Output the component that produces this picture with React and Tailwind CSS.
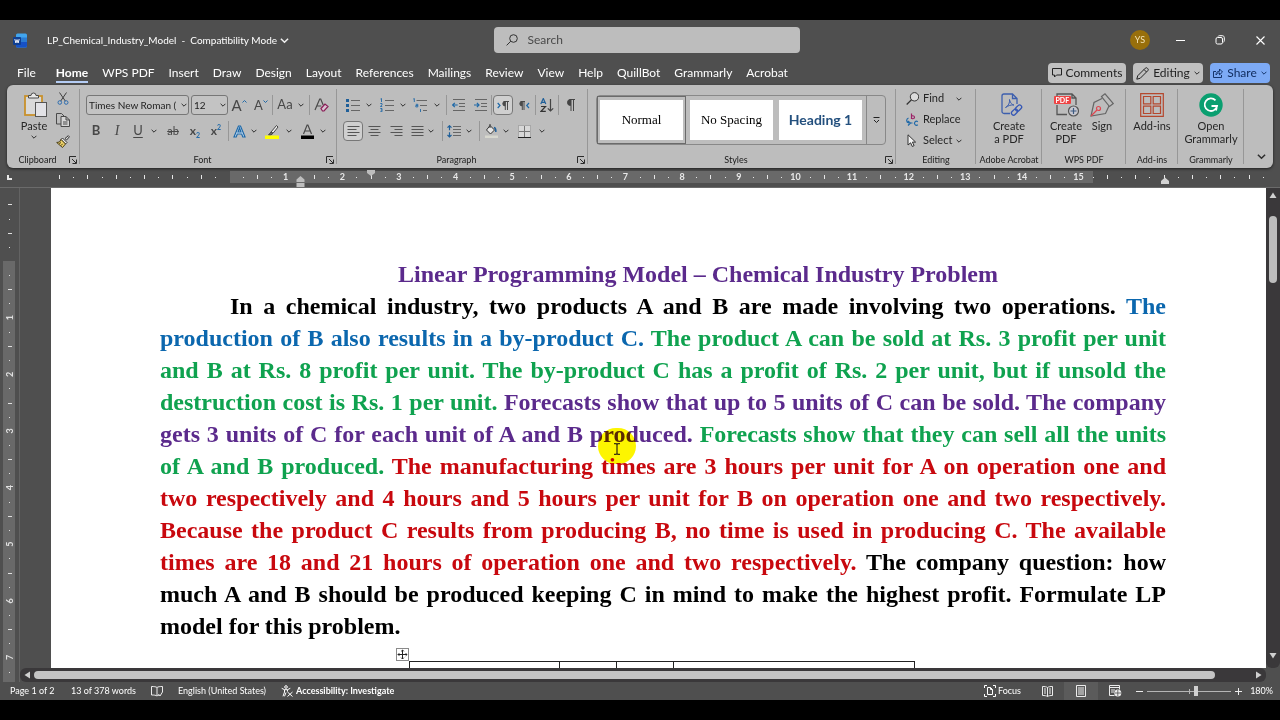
import React from "react";

const cx = (...parts) => parts.filter(Boolean).join(" ");

/* ---------- small building blocks ---------- */

function Svg({ w = 16, h = w, vw = w, vh = h, className, children }) {
  return (
    <svg
      width={w}
      height={h}
      viewBox={`0 0 ${vw} ${vh}`}
      fill="none"
      stroke="#4a4a4a"
      strokeWidth="1"
      aria-hidden="true"
      className={cx("shrink-0", className)}
    >
      {children}
    </svg>
  );
}

function Chevron({ size = 6, className = "stroke-[#2e2e2e]" }) {
  return (
    <svg width={size} height={size} viewBox="0 0 6 6" fill="none" strokeWidth="1" aria-hidden="true" className={cx("shrink-0", className)}>
      <path d="M0.6 1.8 3 4.2 5.4 1.8" />
    </svg>
  );
}

function Tool({ label, w = "w-5", boxed, children, className }) {
  return (
    <button
      type="button"
      aria-label={label}
      className={cx(
        "flex h-5 shrink-0 items-center justify-center",
        w,
        boxed && "rounded border border-[#777] bg-[#cfcfcf]",
        className
      )}
    >
      {children}
    </button>
  );
}

const Drop = ({ label, w = "w-2" }) => (
  <Tool label={label} w={w}>
    <Chevron />
  </Tool>
);

const Sep = ({ className }) => <span className={cx("h-5 w-px shrink-0 bg-[#979797]", className)} />;

function Launcher({ label }) {
  return (
    <button type="button" aria-label={label} className="absolute right-[3px] bottom-1">
      <Svg w={8}>
        <path stroke="#2b2b2b" d="M0.5 7V0.5H7M3 3l4 4M7.500 3.500v4h-4" />
      </Svg>
    </button>
  );
}

function Group({ label, w, launcher, children }) {
  return (
    <section aria-label={label} className={cx("relative flex shrink-0 flex-col", w)}>
      <div className="flex-1">{children}</div>
      <div className={cx("h-4 text-center text-[9px] leading-4 whitespace-nowrap text-[#1c1c1c]", launcher && "pr-3")}>{label}</div>
      {launcher && <Launcher label={launcher} />}
      <span className="absolute top-1 right-0 bottom-1 w-px bg-[#979797]" />
    </section>
  );
}

/* ---------- title bar ---------- */

function WordLogo() {
  return (
    <Svg w={14} h={15} className="stroke-none">
      <rect x="3" y="0.5" width="11" height="14" rx="1.500" fill="#41a5ee" stroke="none" />
      <rect x="3" y="4.500" width="11" height="5" fill="#2b7cd3" stroke="none" />
      <path d="M3 9h11v4a1.500 1.500 0 0 1-1.500 1.500h-8A1.500 1.500 0 0 1 3 13z" fill="#1651c6" stroke="none" />
      <rect x="0" y="4" width="8" height="8" rx="1" fill="#103f91" stroke="none" />
      <path d="M1.800 6 2.900 10 4 6.600 5.100 10 6.200 6" stroke="#fff" strokeWidth="0.9" />
    </Svg>
  );
}

function TitleBar() {
  return (
    <header className="flex h-10 shrink-0 items-center text-[#f0f0f0]">
      <div className="flex flex-1 items-center pl-[13px]">
        <WordLogo />
        <button type="button" className="ml-5 flex items-center gap-[3px] text-[10px] whitespace-nowrap text-white">
          <span>LP_Chemical_Industry_Model&nbsp; -&nbsp; Compatibility Mode</span>
          <Chevron size={9} className="stroke-[#f0f0f0]" />
        </button>
      </div>
      <label className="flex h-[26px] w-[306px] items-center gap-2.5 rounded-sm bg-[#bdbdbd] pl-3">
        <Svg w={12}>
          <circle cx="7.500" cy="4.500" r="3.800" stroke="#333" />
          <path d="M4.800 7.200 0.600 11.400" stroke="#333" />
        </Svg>
        <input
          type="search"
          aria-label="Search"
          placeholder="Search"
          className="w-full bg-transparent text-xs text-[#333] outline-none placeholder:text-[#4a4a4a]"
        />
      </label>
      <div className="flex flex-1 justify-end">
        <button type="button" aria-label="Account" className="flex w-10 justify-center">
          <span className="flex size-5 items-center justify-center rounded-full bg-[#986f0b] text-[9px] text-[#f3e3b5]">YS</span>
        </button>
        <button type="button" aria-label="Minimize" className="flex w-10 items-center justify-center">
          <Svg w={9}><path d="M0 4.500h9" stroke="#fff" /></Svg>
        </button>
        <button type="button" aria-label="Restore" className="flex w-10 items-center justify-center">
          <Svg w={10}>
            <rect x="1" y="2.500" width="6.500" height="6.500" rx="1.500" stroke="#fff" />
            <path d="M3 1.500C3.300 0.900 3.700 0.700 4.300 0.700H7.300C8.500 0.700 9.300 1.500 9.300 2.700V5.700C9.300 6.400 9 6.900 8.500 7.100" stroke="#fff" />
          </Svg>
        </button>
        <button type="button" aria-label="Close" className="flex w-10 items-center justify-center">
          <Svg w={9}><path d="M0.500 0.500 8.500 8.500M8.500 0.500 0.500 8.500" stroke="#fff" strokeWidth="1.100" /></Svg>
        </button>
      </div>
    </header>
  );
}

/* ---------- tabs ---------- */

const TABS = [
  "File", "Home", "WPS PDF", "Insert", "Draw", "Design", "Layout", "References", "Mailings",
  "Review", "View", "Help", "QuillBot", "Grammarly", "Acrobat",
];

function TabRow() {
  return (
    <div className="flex h-[25px] shrink-0 items-start justify-between pr-2.5">
      <nav className="flex gap-3.5 pt-1 pl-[17px] text-xs leading-[18px] text-white">
        {TABS.map((t) => (
          <a
            key={t}
            href={"#" + t.toLowerCase().replace(" ", "-")}
            className={cx(
              "h-[19px] whitespace-nowrap",
              t === "File" && "mr-1.5",
              t === "Home" && "border-b-2 border-[#b5cdf5] font-bold text-white"
            )}
          >
            {t}
          </a>
        ))}
      </nav>
      <div className="flex gap-[7px] pt-[3px] text-xs text-[#222]">
        <button type="button" className="flex h-5 w-[78px] items-center justify-center gap-1 rounded-sm bg-[#c0c0c0]">
          <Svg w={10}><path d="M0.500 0.500h9v6.500h-5L2.500 9V7H0.500z" stroke="#222" /></Svg>
          Comments
        </button>
        <button type="button" className="flex h-5 w-[70px] items-center justify-center gap-1 rounded-sm bg-[#c0c0c0]">
          <Svg w={13}><path d="M0.800 12.200 1.700 8.800 9.300 1.200a1.400 1.400 0 0 1 2 0l.5.5a1.400 1.400 0 0 1 0 2L4.200 11.300zM8 2.500l2.500 2.500" stroke="#222" /></Svg>
          Editing
          <Chevron />
        </button>
        <button type="button" className="flex h-5 w-[60px] items-center justify-center gap-1 rounded-sm bg-[#7daaf5] text-[#0f2a5c]">
          <Svg w={10}><path d="M3 3.500H0.500v6h8V7M3 7C3 4.500 4.500 3.300 6.500 3.300V1L9.500 4 6.500 6.800V4.900C5 4.900 4 5.500 3 7z" stroke="#16356b" /></Svg>
          Share
          <Chevron className="stroke-[#16356b]" />
        </button>
      </div>
    </div>
  );
}

/* ---------- ribbon groups ---------- */

function ClipboardGroup() {
  return (
    <Group label="Clipboard" w="w-[73px]" launcher="Clipboard options">
      <div className="flex pt-[7px] pl-[15px]">
        <button type="button" className="flex w-6 flex-col items-center text-[11px] leading-4">
          <Svg w={24} h={26} className="ml-0.5">
            <rect x="2" y="4" width="17" height="19" fill="#d9d9d9" stroke="#c8912c" strokeWidth="1.800" />
            <path d="M5.500 6V3.500H8a2.500 2.500 0 0 1 5 0h2.500V6z" fill="#e9e9e9" stroke="#4b4b4b" />
            <rect x="12.500" y="10.500" width="11" height="14" fill="#e2e2e6" stroke="#555" />
          </Svg>
          Paste
          <Chevron />
        </button>
        <div className="ml-2.5 flex flex-col items-center gap-2">
          <button type="button" aria-label="Cut">
            <Svg w={12} h={13} className="block">
              <path d="M2.500 0.500 8.300 9M9.500 0.500 3.700 9" stroke="#3f3f3f" />
              <circle cx="2.800" cy="10.500" r="1.800" stroke="#2b6cb0" />
              <circle cx="9.200" cy="10.500" r="1.800" stroke="#2b6cb0" />
            </Svg>
          </button>
          <button type="button" aria-label="Copy">
            <Svg w={14} h={14} className="block">
              <path d="M5 11H0.500V0.500h5L8 3" />
              <path d="M5 3.500h5L13.500 7v6.500H5zM10 3.500V7h3.500M7 9h4.500M7 11h4.500" fill="#d6d6d6" />
            </Svg>
          </button>
          <button type="button" aria-label="Format Painter">
            <Svg w={14} h={13} className="block">
              <path d="M9 3.500 12.300 0.700 13.400 1.800 10.600 5z" fill="#ddd" stroke="#333" />
              <path d="M6.500 3 11 7.500 9.500 9 5 4.500z" fill="#eee" stroke="#333" />
              <path d="M5 4.500 9.500 9 6.500 12.500 0.700 7.500 3.500 7z" fill="#f0d36a" stroke="#4a3f1a" />
              <path d="M3.200 8.800 5 7.500M5 10.600 6.600 8.800" stroke="#4a3f1a" />
            </Svg>
          </button>
        </div>
      </div>
    </Group>
  );
}

function Combo({ label, value, w }) {
  return (
    <span className={cx("relative h-5 shrink-0", w)}>
      <select
        aria-label={label}
        defaultValue={value}
        className="block size-full appearance-none rounded-[3px] border border-[#777] bg-[#c3c3c3] pl-0.5 text-[10px] text-[#222]"
      >
        <option>{value}</option>
      </select>
      <span className="pointer-events-none absolute top-[7px] right-0.5">
        <Chevron className="block stroke-[#2e2e2e]" />
      </span>
    </span>
  );
}

function FontGroup() {
  return (
    <Group label="Font" w="w-[257px]" launcher="Font options">
      <div className="flex items-center pt-2.5 pl-1.5 text-[#484848]">
        <Combo label="Font name" value="Times New Roman (" w="w-[103px]" />
        <Combo label="Font size" value="12" w="w-[37px] ml-0.5" />
        <Tool label="Grow font" w="w-5.5">
          <span className="text-[15px] leading-5">A</span>
          <Svg w={5} className="mb-2"><path d="M0.500 3.500 2.500 1.500 4.500 3.500" stroke="#1f69a8" /></Svg>
        </Tool>
        <Tool label="Shrink font" w="w-5.5">
          <span className="text-[13px] leading-5">A</span>
          <Svg w={5} className="mb-2"><path d="M0.500 1.500 2.500 3.500 4.500 1.500" stroke="#1f69a8" /></Svg>
        </Tool>
        <Sep />
        <Tool label="Change case" w="w-6"><span className="text-[13px]">Aa</span></Tool>
        <Drop label="Change case options" />
        <Sep className="ml-1" />
        <Tool label="Clear formatting" w="w-5.5">
          <Svg w={15} h={14}>
            <path d="M1 12 5.700 1h1l2.500 6M2.800 8h4.500" strokeWidth="1.200" />
            <path d="M7 10.500 11 6l3 2.500-4 4.500H8.500z" fill="#d9c3d2" stroke="#8a1c56" strokeWidth="1.200" />
          </Svg>
        </Tool>
      </div>
      <div className="flex items-center pt-1.5 pl-1.5 text-[#484848]">
        <Tool label="Bold"><b className="text-[13px]">B</b></Tool>
        <Tool label="Italic" w="w-5.5"><i className="font-['Liberation_Serif',serif] text-sm">I</i></Tool>
        <Tool label="Underline"><span className="text-[13px] underline underline-offset-2">U</span></Tool>
        <Drop label="Underline options" w="w-3" />
        <Tool label="Strikethrough" w="w-6.5"><s className="text-[11px]">ab</s></Tool>
        <Tool label="Subscript" w="w-4.5"><b className="text-xs">x</b><b className="mt-2 text-[7px] text-[#1f69a8]">2</b></Tool>
        <Tool label="Superscript" w="w-6"><b className="text-xs">x</b><b className="mb-2 text-[7px] text-[#1f69a8]">2</b></Tool>
        <Sep />
        <Tool label="Text effects">
          <Svg w={13} h={13}>
            <path d="M1 12 5.500 1h2L12 12H9.800L8.700 9H4.300L3.200 12zM5 7h3L6.500 3z" fill="#cfe3f5" stroke="#1f69a8" strokeWidth="1.200" />
          </Svg>
        </Tool>
        <Drop label="Text effects options" w="w-2.5" />
        <Tool label="Highlight color" w="w-6.5">
          <Svg w={14} h={15}>
            <path d="M6 8 11.500 1.500 13 3 8 9.300z" fill="#eee" stroke="#444" />
            <path d="M6 8 8 9.300 6 11H3.500z" fill="#666" stroke="#444" />
            <rect y="11.500" width="14" height="3.500" fill="#ffff00" stroke="none" />
          </Svg>
        </Tool>
        <Drop label="Highlight options" />
        <Tool label="Font color" w="w-6" className="ml-0.5">
          <Svg w={13} h={15}>
            <path d="M2.500 10 6.100 1h0.800L10.500 10M3.800 7h5.400" strokeWidth="1.200" />
            <rect y="11.500" width="13" height="3.500" fill="#000" stroke="none" />
          </Svg>
        </Tool>
        <Drop label="Font color options" />
      </div>
    </Group>
  );
}

const Lines = ({ d }) => <Svg w={13} h={10}><path d={d} stroke="#555" /></Svg>;

function ParagraphGroup() {
  return (
    <Group label="Paragraph" w="w-[251px]" launcher="Paragraph options">
      <div className="flex items-center pt-2.5 pl-1.5">
        <Tool label="Bullets">
          <Svg w={14} h={14}>
            <path d="M5 2.500h9M5 7.500h9M5 12.500h9" stroke="#666" />
            <path d="M0 1h3v3H0zM0 6h3v3H0zM0 11h3v3H0z" fill="#1f5f99" stroke="none" />
          </Svg>
        </Tool>
        <Drop label="Bullet options" w="w-3" />
        <Tool label="Numbering" w="w-6">
          <Svg w={14} h={14}>
            <path d="M5 2.500h9M5 7.500h9M5 12.500h9" stroke="#666" />
            <path d="M0.500 1 1.500 0.500V4M0.300 5.500h1.700v1.300L0.400 8.500H2.200M0.300 10.500H2v3.200H0.300M0.800 12H2" stroke="#1f69a8" strokeWidth="0.900" />
          </Svg>
        </Tool>
        <Drop label="Numbering options" />
        <Tool label="Multilevel list" w="w-6.5">
          <Svg w={14} h={14}>
            <path d="M3.500 2.500H14M7 7.500h7M10 12.500h4" stroke="#666" />
            <path d="M0.300 1 1.300 0.500V4M2.800 6.300h2v2.600h-2V7.500h2M7.500 11v3" stroke="#1f69a8" strokeWidth="0.900" />
          </Svg>
        </Tool>
        <Drop label="Multilevel options" />
        <Sep className="ml-[5px]" />
        <Tool label="Decrease indent" w="w-5.5">
          <Svg w={13} h={12}>
            <path d="M1 0.500h12M7 4.500h6M7 7.500h6M1 11.500h12" stroke="#666" />
            <path d="M0.700 6h5M2.800 3.800 0.700 6l2.100 2.200" stroke="#1f69a8" strokeWidth="1.200" />
          </Svg>
        </Tool>
        <Tool label="Increase indent" w="w-5.5">
          <Svg w={13} h={12}>
            <path d="M1 0.500h12M7 4.500h6M7 7.500h6M1 11.500h12" stroke="#666" />
            <path d="M0 6h5M2.900 3.800 5 6 2.900 8.200" stroke="#1f69a8" strokeWidth="1.200" />
          </Svg>
        </Tool>
        <Sep />
        <Tool label="Left to right" boxed className="ml-px">
          <Svg w={12} h={9}>
            <path d="M0.700 2 3 4.500 0.700 7" stroke="#1f69a8" strokeWidth="1.200" />
            <path d="M6.500 0.500H12M8.300 0.500V9M10.500 0.500V9" />
            <path d="M8 0.500a2.200 2.200 0 0 0 0 4.400z" fill="#4a4a4a" />
          </Svg>
        </Tool>
        <Tool label="Right to left" w="w-5.5">
          <Svg w={12} h={9}>
            <path d="M11 2 8.700 4.500 11 7" stroke="#1f69a8" strokeWidth="1.200" />
            <path d="M2.500 0.500H7M4.300 0.500V9M6 0.500V9" />
            <path d="M4 0.500a2.200 2.200 0 0 0 0 4.400z" fill="#4a4a4a" />
          </Svg>
        </Tool>
        <Sep />
        <Tool label="Sort" w="w-5.5">
          <Svg w={14} h={14}>
            <path d="M0.800 6 3.300 0.500 5.800 6M1.800 4.300h3" stroke="#1f5f99" strokeWidth="1.200" />
            <path d="M1 8.500h4.500L1 13.300h4.800" stroke="#333" strokeWidth="1.200" />
            <path d="M10.500 1v12M7.800 10.300l2.700 2.700 2.700-2.700" stroke="#444" strokeWidth="1.200" />
          </Svg>
        </Tool>
        <Sep />
        <Tool label="Show formatting marks" w="w-5.5">
          <Svg w={9} h={12}>
            <path d="M3.500 0.500H9M5 0.500V12M7.500 0.500V12" stroke="#444" />
            <path d="M4.500 0.500a3 3 0 0 0 0 6z" fill="#444" stroke="#444" />
          </Svg>
        </Tool>
      </div>
      <div className="flex items-center pt-1.5 pl-1.5">
        <Tool label="Align left" boxed><Lines d="M0.500 0.500h12M0.500 3.500h9M0.500 6.500h12M0.500 9.500h9" /></Tool>
        <Tool label="Center" w="w-5.5"><Lines d="M0.500 0.500h12M2.500 3.500h8M0.500 6.500h12M2.500 9.500h8" /></Tool>
        <Tool label="Align right" w="w-5.5"><Lines d="M0.500 0.500h12M4.500 3.500h8M0.500 6.500h12M4.500 9.500h8" /></Tool>
        <Tool label="Justify"><Lines d="M0.500 0.500h12M0.500 3.500h12M0.500 6.500h12M0.500 9.500h12" /></Tool>
        <Drop label="Justify options" />
        <Sep className="ml-[7px]" />
        <Tool label="Line spacing" w="w-5.5">
          <Svg w={14} h={13}>
            <path d="M6 1.500h8M6 4.500h8M6 7.500h8M6 10.500h8" stroke="#666" />
            <path d="M2.500 0.700v4.600M0.500 2.700l2-2 2 2M2.500 7.300V12M0.500 10l2 2 2-2" stroke="#1f5f99" strokeWidth="1.200" />
          </Svg>
        </Tool>
        <Drop label="Line spacing options" />
        <Sep className="ml-1.5" />
        <Tool label="Shading" w="w-5.5">
          <Svg w={13} h={14}>
            <path d="M5 1.500 9.500 6 5.500 10 1.500 6z" fill="#e5e5e5" stroke="#333" />
            <path d="M5 0v4" stroke="#333" />
            <path d="M9 3.500c1.800 0.500 2 2.500 1.800 4.500" stroke="#1f5f99" strokeWidth="1.500" />
            <rect x="0" y="11.500" width="13" height="2.500" fill="#d8d8cf" stroke="none" />
          </Svg>
        </Tool>
        <Drop label="Shading options" />
        <Tool label="Borders" w="w-7">
          <Svg w={13} h={13}>
            <rect x="0.500" y="0.500" width="12" height="12" fill="#d8d8d8" stroke="#888" strokeDasharray="1 1" />
            <path d="M6.500 1v11M1 6.500h11" stroke="#777" />
            <path d="M0 12.500h13" stroke="#222" />
          </Svg>
        </Tool>
        <Drop label="Borders options" />
      </div>
    </Group>
  );
}

function StylesGroup() {
  const tile = "h-10 w-[83px] bg-white whitespace-nowrap";
  return (
    <Group label="Styles" w="w-[308px]" launcher="Styles options">
      <div className="mt-2.5 ml-2 flex h-[50px] w-[290px] rounded border border-[#888]">
        <div className="flex flex-1 items-center gap-1">
          <div className="flex h-12 items-center border border-[#6a6a6a] px-0.5">
            <button type="button" className={cx(tile, "font-['Liberation_Serif',serif] text-[13px] text-black")}>Normal</button>
          </div>
          <button type="button" className={cx(tile, "font-['Liberation_Serif',serif] text-[13px] text-black")}>No Spacing</button>
          <button type="button" className={cx(tile, "ml-0.5 text-sm font-bold text-[#24507e]")}>Heading 1</button>
        </div>
        <button type="button" aria-label="More styles" className="flex w-[19px] items-center justify-center border-l border-[#888]">
          <Svg w={7}><path d="M0.500 0.500h6M1 3l2.500 2.500L6 3" stroke="#222" /></Svg>
        </button>
      </div>
    </Group>
  );
}

function EditingGroup() {
  const row = "flex h-[21px] items-center gap-1 text-[11px] whitespace-nowrap";
  return (
    <Group label="Editing" w="w-20">
      <div className="flex flex-col pt-[3px] pl-2.5">
        <button type="button" className={row}>
          <Svg w={13} h={13}>
            <circle cx="8.500" cy="4.800" r="4.200" fill="#dcdcdc" stroke="#333" />
            <path d="M5.500 7.800 0.700 12.500" stroke="#333" strokeWidth="1.200" />
          </Svg>
          Find
          <span className="ml-2"><Chevron /></span>
        </button>
        <button type="button" className={row}>
          <Svg w={13} h={14}>
            <path d="M5.500 0.500v5.500M5.500 3.500a1.600 1.500 0 1 1 0 1.500" stroke="#9c2367" strokeWidth="1.200" />
            <path d="M11.800 8.800a2 2 0 1 0 0 3" stroke="#1f69a8" strokeWidth="1.200" />
            <path d="M2.500 5C0 6 0 9.500 3 10M1.800 8 4.500 10 2 12.500M4 10h2.500" stroke="#1f69a8" strokeWidth="1.200" />
          </Svg>
          Replace
        </button>
        <button type="button" className={row}>
          <Svg w={13} h={13}>
            <path d="M2 0.800V11l2.600-2.200 1.700 3.700 1.800-0.900L6.400 8.100H9.600z" fill="#f2f2f2" stroke="#333" />
          </Svg>
          Select
          <Chevron />
        </button>
      </div>
    </Group>
  );
}

function BigButton({ icon, lines, className }) {
  return (
    <button type="button" className={cx("flex flex-col items-center text-[11px] leading-[13px] whitespace-nowrap", className)}>
      <span className="flex h-7 items-center">{icon}</span>
      {lines.map((l) => (
        <span key={l}>{l}</span>
      ))}
    </button>
  );
}

function ExtensionGroups() {
  return (
    <>
      <Group label="Adobe Acrobat" w="w-[66px]">
        <BigButton
          className="w-full pt-1.5"
          lines={["Create", "a PDF"]}
          icon={
            <Svg w={22} h={24} className="ml-1.5">
              <path d="M9 20.500H3A2 2 0 0 1 1 18.500V3A2 2 0 0 1 3 1h8.500L16 5.500V11M11.500 1V5.500H16" stroke="#3d5fae" strokeWidth="1.300" />
              <path d="M4.500 14.500c3-1.500 4.500-5 4-8 1 4 2.500 5 4.500 5.500-3-0.300-5.500 0.500-8.500 2.500" stroke="#3d5fae" />
              <rect x="10" y="17" width="7" height="4.200" rx="2.100" transform="rotate(-45 13.500 19)" stroke="#3557b5" strokeWidth="1.300" />
              <rect x="14" y="13" width="7" height="4.200" rx="2.100" transform="rotate(-45 17.500 15)" stroke="#3557b5" strokeWidth="1.300" />
            </Svg>
          }
        />
      </Group>
      <Group label="WPS PDF" w="w-[84px]">
        <div className="flex pt-1.5 pl-1.5">
          <BigButton
            className="w-9"
            lines={["Create", "PDF"]}
            icon={
              <Svg w={25} h={24}>
                <path d="M3 4V1h15l4 4v7M18 1v4h4M3 12v9.500h10" stroke="#555" strokeWidth="1.300" />
                <rect x="0" y="3" width="17" height="8" rx="1" fill="#ef4444" stroke="none" />
                <text x="1.500" y="9.800" fontSize="7" fontWeight="700" fill="#fff" stroke="none">PDF</text>
                <circle cx="19.500" cy="18" r="5" fill="#c8c8d0" stroke="#555" strokeWidth="1.200" />
                <path d="M16.500 18h6M19.500 15v6" stroke="#3c5a80" strokeWidth="1.200" />
              </Svg>
            }
          />
          <BigButton
            className="w-9"
            lines={["Sign"]}
            icon={
              <Svg w={24} h={24}>
                <path d="M11.500 3.500 15 0.800 23.300 10.500 19.500 13.500z" stroke="#666" strokeWidth="1.200" />
                <path d="M12 5.500 4 9.500 1 23l14.500-2.500L19 13" stroke="#666" strokeWidth="1.200" />
                <path d="M1 23l6-6" stroke="#e0454f" strokeWidth="1.200" />
                <circle cx="8.500" cy="15.500" r="2" stroke="#e0454f" strokeWidth="1.200" />
              </Svg>
            }
          />
        </div>
      </Group>
      <Group label="Add-ins" w="w-[52px]">
        <BigButton
          className="w-full pt-1.5"
          lines={["Add-ins"]}
          icon={
            <Svg w={24} h={24}>
              <path
                d="M0.700 0.700h22.600v22.600H0.700zM3.500 3.500h7.300v7.300H3.500zM13.200 3.500h7.300v7.300h-7.300zM3.500 13.200h7.300v7.300H3.500zM13.200 13.200h7.300v7.300h-7.300z"
                stroke="#b5482e"
                strokeWidth="1.200"
              />
            </Svg>
          }
        />
      </Group>
      <Group label="Grammarly" w="w-[66px]">
        <BigButton
          className="w-full pt-1.5"
          lines={["Open", "Grammarly"]}
          icon={
            <Svg w={24} h={24}>
              <circle cx="12" cy="12" r="11.700" fill="#0a9f70" stroke="none" />
              <path d="M16.500 7.300A6.300 6.300 0 1 0 18 13.500M12.500 13h5.500l-1 4.500" stroke="#fff" strokeWidth="1.800" />
            </Svg>
          }
        />
      </Group>
    </>
  );
}

function Ribbon() {
  return (
    <div className="mx-[7px] flex h-[83px] shrink-0 rounded-md bg-[#bdbdbd] text-[#262626] shadow-[0_1px_3px_rgba(0,0,0,0.6)]">
      <ClipboardGroup />
      <FontGroup />
      <ParagraphGroup />
      <StylesGroup />
      <EditingGroup />
      <ExtensionGroups />
      <div className="flex flex-1 items-end justify-end pr-[7px] pb-[7px]">
        <button type="button" aria-label="Collapse ribbon"><Chevron size={9} className="block stroke-[#2e2e2e]" /></button>
      </div>
    </div>
  );
}

/* ---------- rulers ---------- */

const CM = 56.64;

function marks(from, to, first, last) {
  const out = [];
  for (let q = from * 4; q <= to * 4; q++) {
    const cm = q / 4;
    if (q === 0) continue;
    if (q % 4 === 0 && cm >= first && cm <= last) out.push({ cm, kind: "number" });
    else out.push({ cm, kind: q % 2 === 0 ? "bar" : "dot" });
  }
  return out;
}

function HorizontalRuler() {
  const zero = 229;
  return (
    <div className="h-5 shrink-0 overflow-hidden border-b border-[#6b6b6b]">
      <svg width="100%" height="20" fill="#e8e8e8" aria-label="Horizontal ruler" role="img">
        <rect x="230" y="3" width="863" height="12" fill="#696969" />
        <path d="M7 7v5h5v-2H9V7z" />
        {marks(-3, 18.25, 1, 15).map(({ cm, kind }) => {
          const x = zero + cm * CM;
          if (kind === "number")
            return <text key={cm} x={x} y="12" fontSize="9" fontWeight="700" textAnchor="middle">{cm}</text>;
          return <rect key={cm} x={Math.round(x)} y={kind === "bar" ? 7 : 9} width="1" height={kind === "bar" ? 4 : 1} />;
        })}
        <path d="M367 2h8v3l-4 3-4-3z" fill="#bdbdbd" />
        <path d="M296.500 14v-2.500l4-3.500 4 3.500V14zM296.500 15h8v4h-8z" fill="#bdbdbd" />
        <path d="M1161 16v-3l4-3.500 4 3.500v3z" fill="#d2d2d2" />
      </svg>
    </div>
  );
}

function VerticalRuler() {
  const zero = 73;
  return (
    <div className="w-5 shrink-0 overflow-hidden border-r border-[#636363]">
      <svg width="19" height="100%" fill="#e0e0e0" aria-label="Vertical ruler" role="img">
        <rect x="3" y="73" width="12" height="100%" fill="#696969" />
        {marks(-1, 7.25, 1, 7).map(({ cm, kind }) => {
          const y = zero + cm * CM;
          if (kind === "number")
            return (
              <text key={cm} fontSize="9" fontWeight="700" textAnchor="middle" transform={`translate(13 ${y}) rotate(-90)`}>
                {cm}
              </text>
            );
          return <rect key={cm} x={kind === "bar" ? 8 : 9} y={Math.round(y)} width={kind === "bar" ? 4 : 1} height="1" />;
        })}
      </svg>
    </div>
  );
}

/* ---------- document ---------- */

function DocumentPage() {
  return (
    <article className="relative ml-[31px] flex-1 overflow-hidden bg-white pt-[70px] pr-[100px] pl-[109px] font-['Liberation_Serif',serif] text-2xl leading-8 font-bold text-black">
      <h1 className="text-center indent-[70px] text-[#5b2a8c]">Linear Programming Model – Chemical Industry Problem</h1>
      <p className="text-justify indent-[70px]">
        In a chemical industry, two products A and B are made involving two operations.{" "}
        <span className="text-[#0b67ae]">The production of B also results in a by-product C.</span>{" "}
        <span className="text-[#0fa24f]">
          The product A can be sold at Rs. 3 profit per unit and B at Rs. 8 profit per unit. The by-product C has a profit
          of Rs. 2 per unit, but if unsold the destruction cost is Rs. 1 per unit.
        </span>{" "}
        <span className="text-[#5b2a8c]">
          Forecasts show that up to 5 units of C can be sold. The company gets 3 units of C for each unit of A and B
          produced.
        </span>{" "}
        <span className="text-[#0fa24f]">Forecasts show that they can sell all the units of A and B produced.</span>{" "}
        <span className="text-[#c8080e]">
          The manufacturing times are 3 hours per unit for A on operation one and two respectively and 4 hours and 5 hours
          per unit for B on operation one and two respectively. Because the product C results from producing B, no time is
          used in producing C. The available times are 18 and 21 hours of operation one and two respectively.
        </span>{" "}
        The company question: how much A and B should be produced keeping C in mind to make the highest profit. Formulate
        LP model for this problem.
      </p>
      <div className="relative mt-[19px] ml-[249px] w-[506px]">
        <button type="button" aria-label="Move table" className="absolute -top-[13px] -left-[13px] bg-white">
          <Svg w={13} className="block">
            <rect x="0.500" y="0.500" width="12" height="12" stroke="#8a8a8a" />
            <path d="M6.500 2v9M2 6.500h9M5.200 3.300 6.500 2l1.300 1.300M5.200 9.700l1.300 1.300 1.300-1.300M3.300 5.200 2 6.500l1.300 1.300M9.700 5.200 11 6.500 9.700 7.800" stroke="#222" />
          </Svg>
        </button>
        <table className="w-full table-fixed border-collapse">
          <tbody>
            <tr className="h-8">
              <td className="w-[150px] border border-[#222]" />
              <td className="w-[57px] border border-[#222]" />
              <td className="w-[57px] border border-[#222]" />
              <td className="border border-[#222]" />
            </tr>
          </tbody>
        </table>
      </div>
      <div className="absolute top-[240px] left-[547px] h-[36px] w-[38px] rounded-full bg-[#fdf500] mix-blend-multiply" />
      <Svg w={8} h={12} className="absolute top-[255px] left-[562px]">
        <path d="M1 0.700h2.200L4 1.500 4.800 0.700H7M4 1.500v9M1 11.300h2.200L4 10.500l0.800 0.800H7" stroke="#3d3510" strokeWidth="1.300" />
      </Svg>
    </article>
  );
}

function Arrow({ d, label }) {
  return (
    <button type="button" aria-label={label}>
      <Svg w={8} className="block"><path d={d} fill="#d0d0d0" stroke="none" /></Svg>
    </button>
  );
}

function Workspace() {
  return (
    <div className="flex min-h-0 flex-1">
      <VerticalRuler />
      <div className="flex min-w-0 flex-1 flex-col">
        <div className="flex min-h-0 flex-1">
          <DocumentPage />
          <div className="flex w-3.5 shrink-0 flex-col items-center rounded-b-md bg-[#3a383a] pt-[3px] pb-0.5">
            <Arrow label="Scroll up" d="M0.500 7 4 1.500 7.500 7z" />
            <span className="mt-[17px] h-[67px] w-2 rounded-full bg-[#bdbdbd]" />
            <span className="mt-auto"><Arrow label="Scroll down" d="M0.500 1 4 6.500 7.500 1z" /></span>
          </div>
        </div>
        <div className="mr-3.5 flex h-3.5 shrink-0 items-center rounded-md bg-[#3a383a] pr-[3px] pl-[3px]">
          <Arrow label="Scroll left" d="M7 0.500 1.500 4 7 7.500z" />
          <span className="mr-10 ml-[3px] h-2 flex-1 rounded-full bg-[#c4c4c4]" />
          <Arrow label="Scroll right" d="M1 0.500 6.500 4 1 7.500z" />
        </div>
      </div>
    </div>
  );
}

/* ---------- status bar ---------- */

function StatusBar() {
  return (
    <footer className="flex h-[18px] shrink-0 items-center justify-between pr-[7px] pl-2.5 text-[9px] whitespace-nowrap text-white">
      <div className="flex items-center">
        <button type="button" className="w-[61px] text-left">Page 1 of 2</button>
        <button type="button" className="w-20 text-left">13 of 378 words</button>
        <button type="button" aria-label="Proofing" className="w-[27px]">
          <Svg w={12} h={11} className="block">
            <path d="M6 1.500v8M6 1.500C5 0.700 3 0.500 0.500 0.500V9C3 9 5 9.200 6 10c0.500-0.500 1-0.700 2-0.900M6 1.500c1-0.800 3-1 5.500-1V6M7.500 8l1.500 2 2.800-4.500" stroke="#ececec" />
          </Svg>
        </button>
        <button type="button" className="w-[103px] text-left">English (United States)</button>
        <button type="button" className="flex items-center gap-[3px] font-bold">
          <Svg w={12} h={12}>
            <circle cx="5" cy="2" r="1.300" stroke="#fff" />
            <path d="M0.700 3.300 3.500 4.700V7L2 11.300M9.300 3.300 6.500 4.700V6.500M5 7.500 3.500 11.300M3.500 4.700h3M6.500 7l5 4.500M11.500 7l-5 4.500" stroke="#fff" />
          </Svg>
          Accessibility: Investigate
        </button>
      </div>
      <div className="flex items-center">
        <button type="button" className="flex w-[47px] items-center gap-0.5">
          <Svg w={12} h={12}>
            <path d="M0.500 3V0.500H3M9 0.500h2.500V3M0.500 9v2.500H3M9 11.500h2.500V9M3.500 2.500h3l2 2v5h-5zM6.500 2.500v2h2" stroke="#fff" />
          </Svg>
          Focus
        </button>
        <button type="button" aria-label="Read mode" className="flex h-[18px] w-[33px] items-center justify-center">
          <Svg w={11} h={11}><path d="M5.500 1.500v9M5.500 1.500C4.500 0.700 2.500 0.500 0.500 0.500v9c2 0 4 0.200 5 1 1-0.800 3-1 5-1v-9c-2 0-4 0.200-5 1M2 3h2M2 5h2M2 7h2M7 3h2M7 5h2M7 7h2" stroke="#ececec" /></Svg>
        </button>
        <button type="button" aria-label="Print layout" className="flex h-[18px] w-[34px] items-center justify-center bg-[#5b5b5b]">
          <Svg w={10} h={12}><path d="M0.500 0.500h9v11h-9zM2 3h6M2 5h6M2 7h6M2 9h6" stroke="#ececec" /></Svg>
        </button>
        <button type="button" aria-label="Web layout" className="flex h-[18px] w-[34px] items-center justify-center">
          <Svg w={13} h={12}>
            <path d="M5.500 10.500h-5v-10h10v4M0.500 2.500h10M2 5h4M2 7h3" stroke="#ececec" />
            <circle cx="8.800" cy="8" r="3.500" fill="#ececec" stroke="none" />
            <path d="M8.800 5v6M6 8h6" stroke="#4f4f4f" strokeWidth="0.800" />
          </Svg>
        </button>
        <button type="button" aria-label="Zoom out" className="flex w-3.5 justify-center">
          <Svg w={7}><path d="M0 3.500h7" stroke="#ececec" /></Svg>
        </button>
        <span className="relative mx-px flex w-[84px] items-center">
          <input
            type="range"
            aria-label="Zoom"
            min="0"
            max="100"
            defaultValue="59"
            className="h-2.5 w-full appearance-none bg-transparent [&::-webkit-slider-runnable-track]:h-px [&::-webkit-slider-runnable-track]:bg-[#b5b5b5] [&::-webkit-slider-thumb]:-mt-[5px] [&::-webkit-slider-thumb]:h-2.5 [&::-webkit-slider-thumb]:w-1 [&::-webkit-slider-thumb]:appearance-none [&::-webkit-slider-thumb]:bg-[#d0d0d0]"
          />
          <span className="absolute top-[3px] left-1/2 h-[5px] w-px bg-[#b5b5b5]" />
        </span>
        <button type="button" aria-label="Zoom in" className="flex w-3 justify-center">
          <Svg w={7}><path d="M0 3.500h7M3.500 0v7" stroke="#ececec" /></Svg>
        </button>
        <button type="button" className="w-[29px] text-right">180%</button>
      </div>
    </footer>
  );
}

export default function App() {
  return (
    <div className="h-screen bg-black py-5">
      <div className="flex h-full flex-col overflow-hidden bg-[#4f4f4f] font-['Lato',sans-serif]">
        <TitleBar />
        <TabRow />
        <Ribbon />
        <HorizontalRuler />
        <Workspace />
        <StatusBar />
      </div>
    </div>
  );
}
